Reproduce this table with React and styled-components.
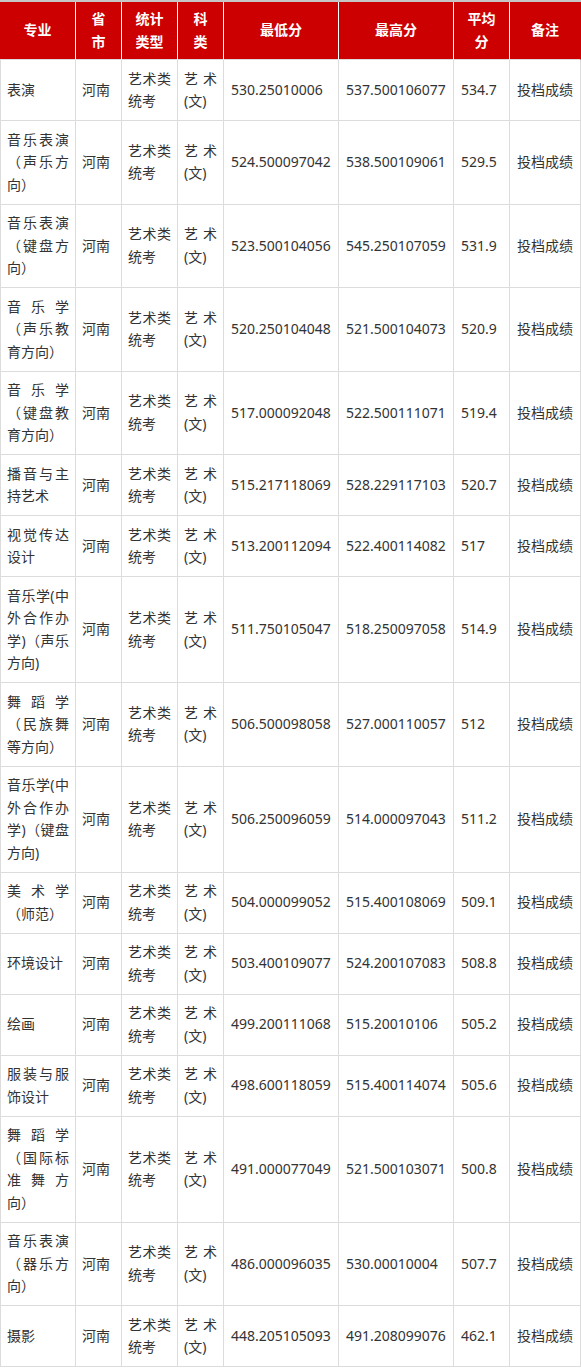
import React from "react";
import styled, { createGlobalStyle } from "styled-components";

const heads = ["专业", "省市", "统计类型", "科类", "最低分", "最高分", "平均分", "备注"];
const headBreaks = ["专业", "省\n市", "统计\n类型", "科\n类", "最低分", "最高分", "平均\n分", "备注"];

const rows = [
  ["表演", "530.25010006", "537.500106077", "534.7"],
  ["音乐表演（声乐方向）", "524.500097042", "538.500109061", "529.5"],
  ["音乐表演（键盘方向）", "523.500104056", "545.250107059", "531.9"],
  ["音乐学（声乐教育方向）", "520.250104048", "521.500104073", "520.9"],
  ["音乐学（键盘教育方向）", "517.000092048", "522.500111071", "519.4"],
  ["播音与主持艺术", "515.217118069", "528.229117103", "520.7"],
  ["视觉传达设计", "513.200112094", "522.400114082", "517"],
  ["音乐学(中外合作办学)（声乐方向)", "511.750105047", "518.250097058", "514.9"],
  ["舞蹈学（民族舞等方向）", "506.500098058", "527.000110057", "512"],
  ["音乐学(中外合作办学)（键盘方向)", "506.250096059", "514.000097043", "511.2"],
  ["美术学（师范）", "504.000099052", "515.400108069", "509.1"],
  ["环境设计", "503.400109077", "524.200107083", "508.8"],
  ["绘画", "499.200111068", "515.20010106", "505.2"],
  ["服装与服饰设计", "498.600118059", "515.400114074", "505.6"],
  ["舞蹈学（国际标准舞方向）", "491.000077049", "521.500103071", "500.8"],
  ["音乐表演（器乐方向）", "486.000096035", "530.00010004", "507.7"],
  ["摄影", "448.205105093", "491.208099076", "462.1"],
];

const GlobalStyle = createGlobalStyle`
  html, body {
    margin: 0;
    padding: 0;
    background: #fff;
  }
  body {
    font-family: "Noto Sans", "Noto Sans CJK SC", sans-serif;
    font-size: 14px;
  }
`;

const Table = styled.div`
  display: grid;
  grid-template-columns: 76px 46px 56px 46px 115px 115px 56px 71px;
  width: 581px;
  border-top: 2px solid #c6c6c6;
  box-sizing: border-box;
`;

const HeadCell = styled.div`
  box-sizing: border-box;
  display: flex;
  flex-direction: column;
  justify-content: center;
  align-items: center;
  background: #cc0000;
  color: #fff;
  font-weight: 700;
  line-height: 22.5px;
  padding: 6px 4px;
  text-align: center;
  white-space: pre-line;
  border-right: 1px solid ${(p) => (p.$last ? "#cc0000" : "#fff")};
  border-bottom: 1px solid #dcdcdc;
`;

const Cell = styled.div`
  box-sizing: border-box;
  display: flex;
  flex-direction: column;
  justify-content: center;
  color: #333;
  line-height: 22.5px;
  padding: 7.5px 6px;
  text-align: justify;
  word-break: normal;
  border-right: 1px solid #dcdcdc;
  border-bottom: 1px solid #dcdcdc;
  border-left: ${(p) => (p.$first ? "1px solid #dcdcdc" : "0")};
`;

const Num = styled(Cell)`
  padding-left: 7px;
  text-align: left;
`;

export default function App() {
  return (
    <>
      <GlobalStyle />
      <Table>
        {headBreaks.map((h, i) => (
          <HeadCell key={heads[i]} $last={i === headBreaks.length - 1}>
            {h}
          </HeadCell>
        ))}
        {rows.map(([major, low, high, avg]) => (
          <React.Fragment key={major}>
            <Cell $first>{major}</Cell>
            <Cell>河南</Cell>
            <Cell>艺术类统考</Cell>
            <Cell>艺术(文)</Cell>
            <Num>{low}</Num>
            <Num>{high}</Num>
            <Num>{avg}</Num>
            <Num>投档成绩</Num>
          </React.Fragment>
        ))}
      </Table>
    </>
  );
}
